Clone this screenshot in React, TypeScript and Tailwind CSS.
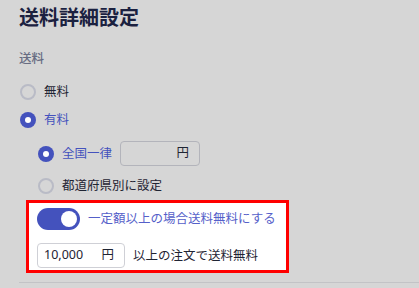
function Radio({ checked }: { checked?: boolean }) {
  if (checked) {
    return (
      <span className="flex h-4 w-4 shrink-0 items-center justify-center rounded-full bg-[#4452bd]">
        <span className="h-[6px] w-[6px] rounded-full bg-white" />
      </span>
    )
  }
  return <span className="h-4 w-4 shrink-0 rounded-full border-2 border-[#b9bbc6]" />
}

export default function App() {
  return (
    <div className="h-[288px] w-full overflow-hidden bg-[#d6d6d6] pl-[19px] font-['Noto_Sans','Noto_Sans_CJK_JP',sans-serif] text-[12.5px] text-[#1f2433]">
      <h1 className="pt-[6px] text-[20px] leading-[24px] font-bold text-[#1b2140]">送料詳細設定</h1>

      <div className="mt-[20px] text-[12.5px] leading-[18px] font-medium text-[#676c82]">送料</div>

      <div className="mt-[14px] flex h-5 items-center gap-[8px] pl-[1px]">
        <Radio />
        <span className="leading-5">無料</span>
      </div>
      <div className="mt-[8px] flex h-5 items-center gap-[8px] pl-[1px]">
        <Radio checked />
        <span className="leading-5 text-[#4452bd]">有料</span>
      </div>

      <div className="pl-[19px]">
        <div className="mt-[11px] flex h-[25px] items-center">
          <Radio checked />
          <span className="ml-[8px] leading-5 text-[#4452bd]">全国一律</span>
          <div className="ml-[8px] flex h-[25px] w-[80px] items-center justify-end rounded-[4px] border border-[#b3b4bb] pr-[10px]">
            円
          </div>
        </div>
        <div className="mt-[10px] flex h-5 items-center gap-[8px]">
          <Radio />
          <span className="leading-5">都道府県別に設定</span>
        </div>
      </div>

      <div className="mt-[4px] ml-[7px] w-[263px] border-[3px] border-[#ff0000] bg-white pt-[5px] pb-[2px] pl-[8px]">
        <div className="flex h-[22px] items-center gap-[8px]">
          <span className="flex h-[22px] w-[43px] items-center justify-end rounded-full bg-[#4452bd] pr-[3px]">
            <span className="h-4 w-4 rounded-full bg-white" />
          </span>
          <span className="leading-5 text-[#5560c9]">一定額以上の場合送料無料にする</span>
        </div>
        <div className="mt-[13px] flex h-[25px] items-center gap-[8px]">
          <div className="flex h-[25px] w-[88px] items-center justify-between rounded-[4px] border border-[#cfd0d6] pr-[10px] pl-[6px]">
            <span>10,000</span>
            <span>円</span>
          </div>
          <span className="leading-5">以上の注文で送料無料</span>
        </div>
      </div>

      <div className="mt-[9px] border-t border-[#c3c3c6]" />
    </div>
  )
}
